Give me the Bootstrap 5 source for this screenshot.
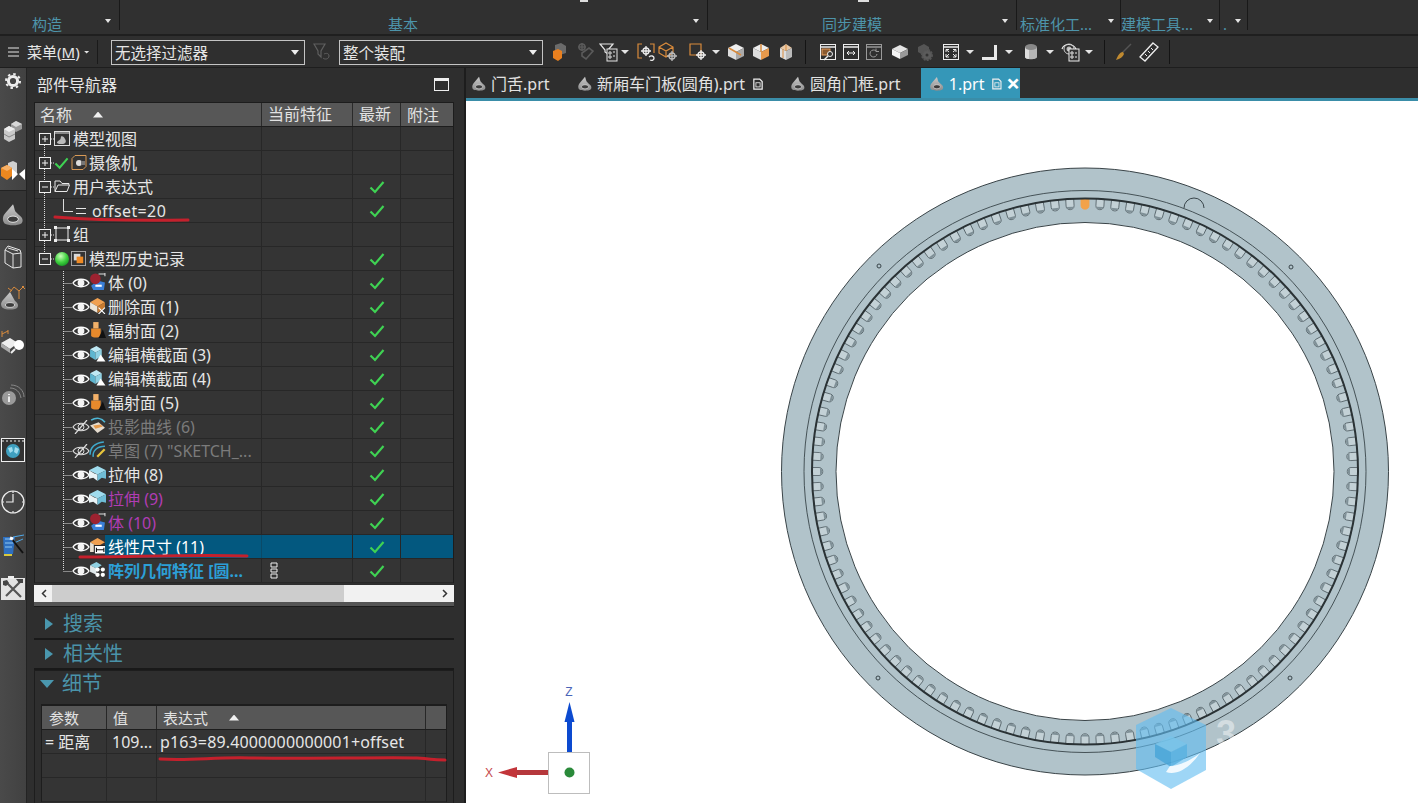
<!DOCTYPE html>
<html lang="zh-CN">
<head>
    <meta charset="UTF-8">
    <meta name="viewport" content="width=device-width, initial-scale=1.0">
    <title>NX</title>
    <link href="https://cdn.jsdelivr.net/npm/bootstrap@5.3.0/dist/css/bootstrap.min.css" rel="stylesheet">
    <style>
        html, body { height: 100%; }
        body {
            width: 1418px; height: 803px; overflow: hidden;
            background: #2e2e2e; color: #e6e6e6;
            font: 16px/24px "Noto Sans", "Noto Sans CJK SC", sans-serif;
        }
        .flex-none { flex: none; }
        /* ribbon */
        .rib { height: 36px; border-bottom: 2px solid #1f1f1f; background: #303030; }
        .rib-grp { height: 30px; border-right: 1px solid #191919; color: #4d94aa; font-size: 15px; line-height: 18px; padding-top: 15px; }
        .rib-caret { position: absolute; bottom: 7px; right: 8px; border: 3px solid transparent; border-top: 4px solid #e4e4e4; border-bottom: 0; }
        .rib-stub { position: absolute; top: 0; width: 11px; height: 2px; background: #ddd; }
        .rib-a { width: 120px; padding-left: 32px; }
        .rib-b { width: 588px; padding-left: 268px; }
        .rib-c { width: 309px; padding-left: 114px; }
        .rib-d { width: 104px; padding-left: 3px; }
        .rib-e { width: 99px; padding-left: 0; }
        .rib-f { width: 28px; padding-left: 3px; }
        .rib-d .rib-caret, .rib-e .rib-caret, .rib-f .rib-caret { right: 6px; }
        .rib-stub1 { left: 460px; width: 8px; }
        .rib-stub2 { left: 738px; }
        /* toolbar */
        .tools { height: 32px; background: #2f2f2f; border-bottom: 1px solid #1e1e1e; padding-top: 4px; }
        .menu-btn { width: 98px; border-right: 1px solid #1a1a1a; height: 24px; font-size: 15px; line-height: 24px; }
        .tb-caret { width: 8px; height: 4px; flex: none; align-self: center; clip-path: polygon(0 0, 100% 0, 50% 100%); background: #e4e4e4; }
        .tb-small { width: 6px; height: 3px; }
        .tb-sep { width: 1px; height: 24px; background: #141414; flex: none; }
        .sel-dark.form-select {
            height: 25px; padding: 0 16px 0 3px; border-radius: 0; border: 1px solid #c4c4c4;
            background-color: #2f2f2f; color: #e6e6e6; font-size: 15.5px; line-height: 22px;
            background-image: url("data:image/svg+xml,%3csvg xmlns='http://www.w3.org/2000/svg' viewBox='0 0 8 5'%3e%3cpath fill='%23eee' d='M0 0h8L4 5z'/%3e%3c/svg%3e");
            background-size: 8px 5px; background-position: right 5px center;
        }
        .sel-a { width: 194px; margin-left: 13px; flex: none; }
        .sel-b { width: 204px; margin-left: 8px; flex: none; }
        .filter-off { margin: 3px 0 0 8px; flex: none; }
        .tool-row { height: 24px; flex: none; }
        .tool-ico { margin-top: 2px; flex: none; }
        /* side strip */
        .strip { width: 27px; flex: none; background: linear-gradient(90deg, #4a4a4a, #414141); border-right: 1px solid #232323; }
        .slot { display: flex; align-items: center; justify-content: center; flex: none; }
        .slot-dim { background: #343434; border-top: 1px solid #232323; border-bottom: 1px solid #232323; }
        .s26 { height: 26px; } .s32 { height: 32px; } .s34 { height: 34px; } .s40 { height: 40px; } .s44 { height: 44px; }
        .s48 { height: 48px; } .s50 { height: 50px; } .s56 { height: 56px; } .s60 { height: 60px; } .s66 { height: 66px; }
        /* navigator */
        .nav-pane { width: 439px; flex: none; background: #2e2e2e; border-right: 2px solid #1d1d1d; padding-left: 7px; position: relative; }
        .pane-title { height: 34px; width: 420px; padding: 5px 5px 0 3px; }
        .max-ico { width: 15px; height: 13px; border: 1px solid #eee; border-top-width: 3px; margin-top: 5px; }
        .grid-wrap { width: 420px; border: 1px solid #1d1d1d; border-top: 0; border-bottom: 0; }
        .grid-row { display: flex; height: 24px; border-bottom: 1px solid #272727; background: #343434; white-space: nowrap; }
        .grid-head { height: 25px; background: #575757; color: #e2e2e2; border-top: 1px solid #1d1d1d; border-bottom: 1px solid #1d1d1d; }
        .grid-head > div { padding-left: 6px; line-height: 25px; }
        .grid-head > .c1 { padding-left: 5px; }
        .c1 { width: 227px; flex: none; display: flex; border-right: 1px solid #272727; }
        .c2 { width: 91px; flex: none; border-right: 1px solid #272727; display: flex; align-items: center; padding-left: 8px; }
        .c3 { width: 48px; flex: none; border-right: 1px solid #272727; display: flex; align-items: center; justify-content: center; }
        .c4 { flex: 1; }
        .grid-head .c1, .grid-head .c2, .grid-head .c3 { border-right-color: #2a2a2a; }
        .sort-up { width: 10px; height: 6px; background: #f0f0f0; clip-path: polygon(50% 0, 100% 100%, 0 100%); align-self: center; margin-left: 21px; }
        .row-text { flex: 1; min-width: 0; margin-left: -3px; padding-left: 3px; }
        .row-sel .row-text { background: #03587f; color: #fff; }
        .row-sel .c2, .row-sel .c3, .row-sel .c4 { background: #03587f; }
        .row-sel .c1 { border-right-color: #0a4a68; }
        .txt-off { color: #7b7b7b; }
        .txt-mod { color: #b13db4; }
        .txt-act { color: #2c9fd6; font-weight: 700; }
        .txt-wide { letter-spacing: .4px; }
        .hscroll { width: 420px; height: 17px; margin-top: 2px; padding: 0 1px; background: #f1f1f1; }
        .hs-arrow { width: 17px; flex: none; display: flex; align-items: center; justify-content: center; }
        .hs-thumb { width: 292px; background: #cdcdcd; }
        .band { width: 420px; height: 5px; background: #555; border-bottom: 1px solid #1c1c1c; margin-bottom: 3px; }
        .sect { width: 420px; height: 30px; color: #4a93a9; font-size: 20px; line-height: 30px; border-bottom: 2px solid #191919; }
        .sect-in { height: 26px; margin: 0 0 7px -6px; color: #4a93a9; font-size: 20px; }
        .tri-r { width: 8px; height: 12px; background: #4a97ae; clip-path: polygon(0 0, 100% 50%, 0 100%); margin: 0 10px 0 11px; }
        .tri-d { width: 14px; height: 8px; background: #4a97ae; clip-path: polygon(0 0, 100% 0, 50% 100%); margin: 0 8px 0 5px; }
        .detail-box { width: 420px; flex: 1; border: 1px solid #1d1d1d; border-bottom: 0; padding: 0 6px; }
        .d1 { width: 65px; flex: none; padding-left: 7px; border-right: 1px solid #272727; }
        .d2 { width: 50px; flex: none; padding-left: 5px; border-right: 1px solid #272727; }
        .d3 { width: 269px; flex: none; padding-left: 3px; border-right: 1px solid #272727; letter-spacing: .14px; }
        .d-wrap { border: 1px solid #1d1d1d; border-bottom: 0; }
        .d-wrap .grid-head > div { font-size: 15px; letter-spacing: 0; }
        .d-wrap .grid-head > .d1 { padding-left: 7px; }
        .d-val { padding-left: 3px; }
        .ink { position: absolute; left: 0; top: 0; pointer-events: none; }
        /* tabs and canvas */
        .tab-bar { height: 33px; flex: none; border-bottom: 3px solid #3a8da8; background: #2e2e2e; }
        .part-tab { height: 30px; display: flex; align-items: center; gap: 4px; padding-top: 1px; color: #e2e2e2; flex: none; }
        .tab-1 { width: 106px; padding-left: 5px; }
        .tab-2 { width: 213px; padding-left: 5px; }
        .tab-3 { width: 136px; padding-left: 5px; }
        .tab-4 { width: 99px; padding-left: 8px; background: #3597b8; color: #fff; }
        .tab-x { font-size: 24px; font-weight: 700; line-height: 1; margin-top: -2px; }
        .canvas { flex: 1; background: #fff; position: relative; }
        .canvas svg { position: absolute; left: 0; top: 0; }
        .main-area { height: 735px; }
    </style>
</head>
<body>
    <svg width="0" height="0" class="position-absolute">
        <defs>
            <linearGradient id="gSeat" x1="0" y1="0" x2="0" y2="1"><stop offset="0" stop-color="#c9c9c9"/><stop offset="1" stop-color="#8b8b8b"/></linearGradient>
            <radialGradient id="gBall" cx=".4" cy=".3" r=".8"><stop offset="0" stop-color="#c8ffb8"/><stop offset=".55" stop-color="#3fd03f"/><stop offset="1" stop-color="#118a20"/></radialGradient>
            <symbol id="i-part" viewBox="0 0 20 20"><path d="M10 1 4 8C1 11 1 15 3 17 6 19 14 19 17 17 19 15 18 12 15 10L12 7C11 5 11 3 10 1Z" fill="url(#gSeat)"/><ellipse cx="10" cy="13.500" rx="4.500" ry="2.600" fill="#3c3c3c" stroke="#e8e8e8" stroke-width=".8"/></symbol>
            <symbol id="i-eye" viewBox="0 0 18 14"><path d="M1 7C4 2 14 2 17 7 14 12 4 12 1 7Z" fill="#333" stroke="#fff" stroke-width="1.400"/><circle cx="9" cy="7" r="3.400" fill="#f4f4f4"/></symbol>
            <symbol id="i-eyeoff" viewBox="0 0 18 14"><path d="M1 7C4 2 14 2 17 7 14 12 4 12 1 7Z" fill="none" stroke="#ddd" stroke-width="1.200"/><circle cx="9" cy="7" r="3" fill="none" stroke="#ddd"/><path d="M3 14 15 0" stroke="#ddd" stroke-width="1.200"/></symbol>
            <symbol id="i-check" viewBox="0 0 16 14"><path d="M1.500 7.500 6 12 14.500 2" fill="none" stroke="#3fd253" stroke-width="2.200"/></symbol>
            <symbol id="i-body" viewBox="0 0 16 16"><path d="M2 12 8 7 15 9 14 16H4Z" fill="#3a7fd8"/><path d="M6 11h6v2H6Z" fill="#fff"/><circle cx="6" cy="5.500" r="5" fill="#9c2230"/><path d="M9 1h6M15 0v3" stroke="#ddd"/></symbol>
            <symbol id="i-del" viewBox="0 0 16 16"><path d="M1 5 8 1 15 5 8 9Z" fill="#f0a050"/><path d="M1 5 8 9V15L1 11Z" fill="#ece5d8"/><path d="M8 9 15 5V10L8 15Z" fill="#c77a2f"/><path d="M9 10 15 16M15 10 9 16" stroke="#fff"/></symbol>
            <symbol id="i-rad" viewBox="0 0 16 16"><path d="M2 7h9v7c-2 2-7 2-9 0Z" fill="#e78a2c"/><path d="M4 1h5v6H4Z" fill="#f2b069"/><path d="M9 16 13 8 16 16Z" fill="#111"/></symbol>
            <symbol id="i-edit" viewBox="0 0 16 16"><path d="M1 4 7 1 12 4 6 7Z" fill="#bfe9f4"/><path d="M1 4 6 7V14L1 11Z" fill="#5fb6d0"/><path d="M6 7 12 4V10L6 14Z" fill="#8fd0e2"/><path d="M11 9 15.500 15.500H7Z" fill="#fff"/></symbol>
            <symbol id="i-proj" viewBox="0 0 16 16"><path d="M2 3C7 0 12 1 15 5" fill="none" stroke="#4eb7d6" stroke-width="1.500"/><path d="M1 8 9 5 15 10 8 15Z" fill="#e6ddd0"/><path d="M4 8 11 7 13 9 6 11Z" fill="#e59a4c"/></symbol>
            <symbol id="i-sketch" viewBox="0 0 16 16"><path d="M1 13C1 6 6 2 14 1M4 15C3 9 8 5 15 5" fill="none" stroke="#3fa9cc" stroke-width="1.400"/><path d="M7 14 14 7 15.500 8.500 8.500 15.500Z" fill="#e8c63c"/></symbol>
            <symbol id="i-ext" viewBox="0 0 16 16"><path d="M0 5 8 1 16 5 8 9Z" fill="#9fdcee"/><path d="M0 5 5 8 8 9V15L4 12 0 13Z" fill="#e9f3f6"/><path d="M16 5 8 9V15L12 12 16 13Z" fill="#6fbdd6"/></symbol>
            <symbol id="i-dim" viewBox="0 0 16 16"><path d="M1 5 8 1 15 5 8 9Z" fill="#f0a050"/><path d="M1 5 8 9V14H1Z" fill="#e8e0d2"/><path d="M5 8h11v8H5Z" fill="#fff" stroke="#222"/><path d="M7 12h7M7 10v4M14 10v4" stroke="#111"/></symbol>
            <symbol id="i-pat" viewBox="0 0 16 16"><path d="M1 4 7 1 12 4 7 7Z" fill="#8fd0e2"/><path d="M1 4 7 7V13L1 10Z" fill="#dfe8ea"/><circle cx="8" cy="8" r="2" fill="#fff"/><circle cx="13" cy="8" r="2" fill="#fff"/><circle cx="8" cy="13" r="2" fill="#fff"/><circle cx="13" cy="13" r="2" fill="#fff"/></symbol>
            <symbol id="i-view" viewBox="0 0 16 16"><rect x=".5" y="1.500" width="15" height="14" fill="#333" stroke="#ddd"/><path d="M1 3h14" stroke="#ddd"/><path d="M3 13C3 11 6 10 6.500 9L7 6.500C9 6 10 7 11 9 13 12 11 14 8 14H5Z" fill="#bbb"/></symbol>
            <symbol id="i-cam" viewBox="0 0 16 16"><path d="M4 1.500h11v11l-3 3H1v-11Z" fill="#333" stroke="#d89a57"/><circle cx="8" cy="9" r="3" fill="#ddd"/><path d="M10 7h4v4h-4Z" fill="#777"/></symbol>
            <symbol id="i-folder" viewBox="0 0 16 16"><path d="M1 13.500V3h5l2 2.500h7V7H4L1 13.500H13L15.500 7" fill="none" stroke="#e8e8e8"/></symbol>
            <symbol id="i-grp" viewBox="0 0 16 16"><rect x="2" y="2" width="12" height="12" fill="none" stroke="#eee"/><path d="M0 0h3v3H0ZM13 0h3v3h-3ZM0 13h3v3H0ZM13 13h3v3h-3Z" fill="#eee"/></symbol>
            <symbol id="i-hist" viewBox="0 0 16 16"><rect x=".5" y=".5" width="15" height="15" fill="#333" stroke="#aaa"/><rect x="3" y="3" width="7" height="7" fill="#d9d9d9"/><rect x="6" y="6" width="7" height="7" fill="#ef8a24"/></symbol>
            <!-- toolbar -->
            <symbol id="t-block" viewBox="0 0 20 20"><path d="M6 3 12 1 17 4V11L11 13 6 11Z" fill="#6b6b6b"/><path d="M4 9 9 7 13 9V16L9 19 4 16Z" fill="#e9801f"/></symbol>
            <symbol id="t-link" viewBox="0 0 20 20"><g fill="none" stroke="#5a5a5a" stroke-width="1.600"><circle cx="6" cy="5" r="3"/><path d="M6 1v8M2 5h8"/><path d="M6 11 13 6 17 9 10 17 6 14Z"/></g></symbol>
            <symbol id="t-filter" viewBox="0 0 20 20"><path d="M1 2h13L9 8v4L6 10V8Z" fill="none" stroke="#e6e6e6" stroke-width="1.200"/><rect x="8" y="7" width="10" height="12" fill="#333" stroke="#e6e6e6"/><path d="M10 10h2v2h-2ZM14 10h2M10 14h2v2h-2ZM14 14h2" stroke="#e6e6e6"/></symbol>
            <symbol id="t-brack" viewBox="0 0 20 20"><path d="M5 2H1v14h4M13 2h4v9" fill="none" stroke="#d98b3c" stroke-width="1.200"/><g stroke="#eee" stroke-width="1.300" fill="none"><circle cx="9" cy="9" r="3"/><path d="M9 4v10M4 9h10"/><path d="M12 15c2-2 5-1 5 1s-2 3-4 2"/></g></symbol>
            <symbol id="t-cubep" viewBox="0 0 20 20"><path d="M1 5 8 1 15 5V11L8 15 1 11ZM1 5 8 9 15 5M8 9V15" fill="none" stroke="#d98b3c" stroke-width="1.200"/><g stroke="#bbb" stroke-width="1.300" fill="none"><circle cx="14" cy="14" r="3"/><path d="M14 9v10M9 14h10"/></g></symbol>
            <symbol id="t-sqp" viewBox="0 0 20 20"><path d="M2 2h11v11H2Z" fill="none" stroke="#d98b3c" stroke-width="1.200"/><g stroke="#eee" stroke-width="1.300" fill="none"><circle cx="13" cy="13" r="3"/><path d="M13 8v10M8 13h10"/></g></symbol>
            <symbol id="t-c1" viewBox="0 0 20 20"><path d="M2 6 10 2 18 6 10 10Z" fill="#eee"/><path d="M2 6 10 10V18L2 14Z" fill="#ddd"/><path d="M18 6 10 10V18L18 14Z" fill="#aaa"/><path d="M3 6 15 13" stroke="#d98b3c" stroke-width="1.500"/></symbol>
            <symbol id="t-c2" viewBox="0 0 20 20"><path d="M2 6 10 2 18 6 10 10Z" fill="#eee"/><path d="M2 6 10 10V18L2 14Z" fill="#ddd"/><path d="M18 6 10 10V18L18 14Z" fill="#e89a4c"/><path d="M10 2V10" stroke="#d98b3c" stroke-width="1.500"/></symbol>
            <symbol id="t-c3" viewBox="0 0 20 20"><path d="M4 6 10 2 16 6 10 9Z" fill="#e8c8a6"/><path d="M4 6 10 9V18L4 15Z" fill="#ddd"/><path d="M16 6 10 9V18L16 15Z" fill="#bbb"/><path d="M10 3V9M7 7V16" stroke="#d98b3c"/></symbol>
            <symbol id="t-w1" viewBox="0 0 20 20"><rect x="2.500" y="2.500" width="15" height="15" fill="none" stroke="#eee"/><path d="M3 5h14" stroke="#eee" stroke-width="1.500"/><rect x="4" y="7" width="8" height="6" fill="#8a5a30" stroke="#e9a060"/><circle cx="12" cy="12" r="2.500" fill="#333" stroke="#eee"/><path d="M10 14 6 18" stroke="#eee" stroke-width="1.500"/></symbol>
            <symbol id="t-w2" viewBox="0 0 20 20"><rect x="2.500" y="2.500" width="15" height="15" fill="none" stroke="#eee"/><path d="M3 5h14" stroke="#eee" stroke-width="1.500"/><path d="M6 11h8M6 11l2-2M6 11l2 2M14 11l-2-2M14 11l-2 2" stroke="#eee" fill="none"/></symbol>
            <symbol id="t-w3" viewBox="0 0 20 20"><rect x="2.500" y="2.500" width="15" height="15" fill="none" stroke="#999"/><path d="M3 5h14" stroke="#999" stroke-width="1.500"/><path d="M13 12a3.500 3.500 0 1 1-1-3M12 6.500V9.500H15" stroke="#999" fill="none"/></symbol>
            <symbol id="t-c4" viewBox="0 0 20 20"><path d="M2 7 10 3 18 7 10 11Z" fill="#e4e4e4"/><path d="M2 7 10 11V17L2 13Z" fill="#f4f4f4"/><path d="M18 7 10 11V17L18 13Z" fill="#999"/></symbol>
            <symbol id="t-gear" viewBox="0 0 20 20"><path d="M3 5 9 2 14 5V11L8 13 3 10Z" fill="#555"/><circle cx="12" cy="13" r="5" fill="#5b5b5b" stroke="#555" stroke-width="2" stroke-dasharray="2 1"/><circle cx="12" cy="13" r="1.500" fill="#333"/></symbol>
            <symbol id="t-w4" viewBox="0 0 20 20"><rect x="2.500" y="2.500" width="15" height="15" fill="none" stroke="#eee"/><path d="M3 5h14" stroke="#eee" stroke-width="1.500"/><path d="M5 10V7.500H8M15 10V7.500H12M5 12V15H8M15 12V15H12M5 7.500 8 10M15 7.500 12 10M5 15 8 12M15 15 12 12" stroke="#eee" fill="none"/></symbol>
            <symbol id="t-ang" viewBox="0 0 20 20"><path d="M15 3H18V18H3V15H15Z" fill="#e8e8e8"/></symbol>
            <symbol id="t-cyl" viewBox="0 0 20 20"><path d="M4 5V15C4 18 16 18 16 15V5Z" fill="#b5b5b5"/><ellipse cx="10" cy="5" rx="6" ry="3" fill="#888"/><path d="M4 5V15C4 16 6 17 8 17V8C6 8 4 7 4 5Z" fill="#ddd"/></symbol>
            <symbol id="t-eye" viewBox="0 0 20 20"><path d="M1 7C3 1 12 1 15 7" fill="none" stroke="#eee" stroke-width="1.200"/><circle cx="8" cy="7" r="5" fill="none" stroke="#ccc"/><circle cx="8" cy="7" r="2.500" fill="#bbb"/><rect x="8" y="7" width="10" height="12" fill="#333" stroke="#eee"/><path d="M10 10h2v2h-2ZM14 11h2M10 14h2v2h-2ZM14 15h2" stroke="#eee"/></symbol>
            <symbol id="t-brush" viewBox="0 0 20 20"><path d="M18 2 9 11" stroke="#555" stroke-width="1.500"/><path d="M10 10C7 10 5 13 3 18 7 17 10 15 11 12Z" fill="#c08a30"/></symbol>
            <symbol id="t-rule" viewBox="0 0 20 20"><path d="M14 1 19 5 6 19 1 15Z" fill="none" stroke="#eee" stroke-width="1.300"/><path d="M12 6l2 2M9 9l2 2M6 12l2 2" stroke="#eee"/></symbol>
            <!-- side strip -->
            <symbol id="s-gear" viewBox="0 0 16 16"><circle cx="8" cy="8" r="4.600" fill="none" stroke="#eee" stroke-width="3"/><circle cx="8" cy="8" r="7" fill="none" stroke="#eee" stroke-width="2" stroke-dasharray="2.500 3"/></symbol>
            <symbol id="s-blocks" viewBox="0 0 20 24"><path d="M8 6 13 3 19 6V11L13 14 8 11Z" fill="#999"/><path d="M8 6 13 9 19 6 13 3Z" fill="#d8d8d8"/><path d="M1 11 6 8 12 11V21L6 24 1 21Z" fill="#c9c9c9"/><path d="M1 11 6 14 12 11 6 8Z" fill="#eee"/><path d="M1 16 6 19 12 16" stroke="#888" fill="none"/></symbol>
            <symbol id="s-ordered" viewBox="0 0 26 26"><path d="M8 2 13 0 17 2V12L13 14 8 12Z" fill="#cfcfcf"/><path d="M1 7 7 4 12 7V15L7 19 1 15Z" fill="#ec8820"/><path d="M1 7 7 10 12 7 7 4Z" fill="#f7b066"/><path d="M12 8 18 13 12 19ZM25 8 19 13 25 19Z" fill="#fff"/></symbol>
            <symbol id="s-book" viewBox="0 0 18 24"><path d="M1 5 4 1 16 5 17 8V22L9 23 1 18Z" fill="none" stroke="#e6e6e6"/><path d="M1 5 9 9V23M9 9 17 8M4 3 14 6" fill="none" stroke="#e6e6e6"/></symbol>
            <symbol id="s-seatdim" viewBox="0 0 26 26"><path d="M10 7 3 15C0 18 1 22 3 23 6 25 14 25 17 23 19 21 18 18 15 16Z" fill="url(#gSeat)"/><ellipse cx="10" cy="20" rx="4.500" ry="2.400" fill="#3c3c3c" stroke="#e8e8e8" stroke-width=".8"/><path d="M10 7 14 2 19 6 24 1M19 6V14M8 3l4 3M22 1l3 3" stroke="#d98b3c" fill="none"/></symbol>
            <symbol id="s-boxmag" viewBox="0 0 26 24"><path d="M1 13 10 8 18 13 10 19Z" fill="#eee"/><path d="M1 13 10 19V23L1 17Z" fill="#aaa"/><path d="M2 4 8 1M2 1V7M8 0V4" stroke="#d98b3c" fill="none"/><circle cx="19" cy="15" r="5" fill="#fff"/><path d="M15 19 11 23" stroke="#eee" stroke-width="2"/></symbol>
            <symbol id="s-info" viewBox="0 0 24 22"><circle cx="8" cy="14" r="7" fill="#9a9a9a"/><path d="M8 10v1M8 12.500V18" stroke="#fff" stroke-width="1.600"/><path d="M9 4C15 4 19 8 20 14M10 1C18 1 23 7 23 13" fill="none" stroke="#888"/></symbol>
            <symbol id="s-web" viewBox="0 0 24 24"><rect x=".5" y=".5" width="23" height="23" fill="#323232" stroke="#eee"/><path d="M1 3h24" stroke="#eee" stroke-dasharray="2 2"/><circle cx="12" cy="13" r="7" fill="#3fa0c0"/><path d="M7 10 11 9 12 13 9 15ZM14 9 18 11 16 16 13 14Z" fill="#9fdcee"/></symbol>
            <symbol id="s-clock" viewBox="0 0 24 24"><circle cx="12" cy="12" r="11" fill="none" stroke="#eee" stroke-width="1.200"/><path d="M12 4V12H5M12 1v2M12 21v2M1 12h2M21 12h2" stroke="#eee" fill="none" stroke-width="1.200"/></symbol>
            <symbol id="s-wand" viewBox="0 0 24 24"><path d="M2 4H14L12 21 3 22Z" fill="#2e6fc0"/><path d="M4 6H13M4 10H12M4 14H11" stroke="#8fc8f0"/><path d="M12 4 23 2M13 10 22 6" stroke="#4ea8e8"/><path d="M10 5 22 20" stroke="#111" stroke-width="2"/><path d="M9 5l3 1" stroke="#fff" stroke-width="3"/><path d="M3 22h8" stroke="#d8c83c" stroke-width="2"/></symbol>
            <symbol id="s-tools" viewBox="0 0 24 24"><rect x="0" y="2" width="24" height="22" fill="#e2e2e2"/><path d="M7 0h6v3H7Z" fill="#eee"/><path d="M5 6 20 21M19 6 5 20" stroke="#555" stroke-width="2.200"/><path d="M15 3h7v4h-4ZM2 5l4-1 2 3-3 3-3-1Z" fill="#444"/></symbol>
            <symbol id="i-doc" viewBox="0 0 12 14"><path d="M1 1h7l3 3v9H1Z" fill="none" stroke="#eee" stroke-width="1.500"/><rect x="3.500" y="5.500" width="5" height="5" fill="none" stroke="#eee"/></symbol>
        </defs>
    </svg>

    <div class="rib d-flex position-relative">
        <div class="rib-grp position-relative text-nowrap rib-a">构造<span class="rib-caret"></span></div>
        <div class="rib-grp position-relative text-nowrap rib-b">基本<span class="rib-caret"></span><span class="rib-stub rib-stub1"></span><span class="rib-stub rib-stub2"></span></div>
        <div class="rib-grp position-relative text-nowrap rib-c">同步建模<span class="rib-caret"></span></div>
        <div class="rib-grp position-relative text-nowrap rib-d">标准化工...<span class="rib-caret"></span></div>
        <div class="rib-grp position-relative text-nowrap rib-e">建模工具...<span class="rib-caret"></span></div>
        <div class="rib-grp position-relative text-nowrap rib-f">.<span class="rib-caret"></span></div>
    </div>

    <div class="tools d-flex align-items-start">
        <div class="menu-btn d-flex align-items-center flex-none">
            <svg width="11" height="10" class="ms-2 hamb" viewBox="0 0 11 10"><path d="M0 1h11M0 5h11M0 9h11" stroke="#e6e6e6"/></svg>
            <span class="text-nowrap ms-1 ps-1">菜单(<u>M</u>)</span>
            <span class="tb-caret ms-1 tb-small"></span>
        </div>
        <select class="form-select sel-dark sel-a"><option>无选择过滤器</option></select>
        <svg width="18" height="18" class="filter-off" viewBox="0 0 18 18"><path d="M1 1h11L8 8v6L5 11V8Z" fill="none" stroke="#5f5f5f" stroke-width="1.200"/><path d="M10 15c2 2 6 1 6-2s-3-3-5-2" fill="none" stroke="#5f5f5f"/></svg>
        <select class="form-select sel-dark sel-b"><option>整个装配</option></select>
        <div id="toolRow" class="d-flex align-items-start tool-row"></div>
    </div>

    <div class="d-flex main-area">
        <div class="strip d-flex flex-column">
            <div class="slot s26"><svg width="16" height="16"><use href="#s-gear"/></svg></div>
            <div class="slot s56 mt-2"><svg width="20" height="24"><use href="#s-blocks"/></svg></div>
            <div class="slot s32"><svg width="26" height="26"><use href="#s-ordered"/></svg></div>
            <div class="slot s50 slot-dim"><svg width="24" height="24"><use href="#i-part"/></svg></div>
            <div class="slot s34"><svg width="18" height="24"><use href="#s-book"/></svg></div>
            <div class="slot s48"><svg width="26" height="26"><use href="#s-seatdim"/></svg></div>
            <div class="slot s40"><svg width="26" height="24"><use href="#s-boxmag"/></svg></div>
            <div class="slot s66"><svg width="24" height="22"><use href="#s-info"/></svg></div>
            <div class="slot s44"><svg width="24" height="24"><use href="#s-web"/></svg></div>
            <div class="slot s60"><svg width="24" height="24"><use href="#s-clock"/></svg></div>
            <div class="slot s26"><svg width="24" height="24"><use href="#s-wand"/></svg></div>
            <div class="slot s60"><svg width="24" height="24"><use href="#s-tools"/></svg></div>
        </div>

        <div class="nav-pane d-flex flex-column">
            <div class="pane-title d-flex justify-content-between">
                <span>部件导航器</span>
                <span class="max-ico"></span>
            </div>
            <div class="grid-wrap">
                <div class="grid-row grid-head">
                    <div class="c1"><span>名称</span><span class="sort-up"></span></div>
                    <div class="c2">当前特征</div>
                    <div class="c3 justify-content-start">最新</div>
                    <div class="c4">附注</div>
                </div>
                <div id="treeRows"></div>
            </div>
            <div class="hscroll d-flex">
                <div class="hs-arrow"><svg width="6" height="9" viewBox="0 0 6 9"><path d="M5 1 1.500 4.500 5 8" fill="none" stroke="#333" stroke-width="1.500"/></svg></div>
                <div class="hs-thumb"></div>
                <div class="ms-auto hs-arrow"><svg width="6" height="9" viewBox="0 0 6 9"><path d="M1 1 4.500 4.500 1 8" fill="none" stroke="#333" stroke-width="1.500"/></svg></div>
            </div>
            <div class="band"></div>
            <div class="sect d-flex align-items-center"><span class="tri-r"></span>搜索</div>
            <div class="sect d-flex align-items-center"><span class="tri-r"></span>相关性</div>
            <div class="detail-box d-flex flex-column">
                <div class="sect-in d-flex align-items-center"><span class="tri-d"></span>细节</div>
                <div class="d-wrap">
                    <div class="grid-row grid-head">
                        <div class="d1">参数</div>
                        <div class="d2">值</div>
                        <div class="d3 d-flex"><span>表达式</span><span class="sort-up"></span></div>
                    </div>
                    <div class="grid-row"><div class="d1 d-val">= 距离</div><div class="d2">109...</div><div class="d3">p163=89.4000000000001+offset</div></div>
                    <div class="grid-row"><div class="d1"></div><div class="d2"></div><div class="d3"></div></div>
                    <div class="grid-row"><div class="d1"></div><div class="d2"></div><div class="d3"></div></div>
                </div>
            </div>
            <!-- hand-drawn red marks over the panel -->
            <svg class="ink" width="439" height="735" viewBox="27 68 439 735" fill="none" stroke="#c5202c" stroke-width="3" stroke-linecap="round">
                <path d="M55 217C80 219 130 221 188 220"/>
                <path d="M80 557C130 557 200 554 247 556"/>
                <path d="M160 759C190 761 215 757 250 758S400 757 417 758 430 760 445 760"/>
            </svg>
        </div>

        <div class="d-flex flex-column flex-grow-1">
            <div class="tab-bar d-flex">
                <div class="part-tab tab-1"><svg width="16" height="16"><use href="#i-part"/></svg>门舌.prt</div>
                <div class="part-tab tab-2"><svg width="16" height="16"><use href="#i-part"/></svg>新厢车门板(圆角).prt<svg width="10" height="12" class="ms-1"><use href="#i-doc"/></svg></div>
                <div class="part-tab tab-3"><svg width="16" height="16"><use href="#i-part"/></svg>圆角门框.prt</div>
                <div class="part-tab tab-4"><svg width="16" height="16"><use href="#i-part"/></svg>1.prt<svg width="10" height="12" class="ms-1"><use href="#i-doc"/></svg><span class="tab-x">×</span></div>
            </div>
            <div class="canvas">
                <svg id="model" width="952" height="702" viewBox="466 101 952 702">
                    <g id="ring"></g>
                    <!-- triad -->
                    <rect x="548.500" y="752.500" width="41" height="41" fill="#fff" stroke="#bdbdbd"/>
                    <path d="M567 722h5v30h-5Z" fill="#0c4ad0"/><path d="M569.500 702 574.500 722H564.500Z" fill="#0c4ad0"/>
                    <path d="M517 770h31v5h-31Z" fill="#b5383c"/><path d="M498 772.500 517 767V778Z" fill="#c2353a"/>
                    <circle cx="569.500" cy="772.500" r="5" fill="#2a8a3a"/>
                    <text x="569" y="696" font-size="12" text-anchor="middle" fill="#4a64b8" font-family="Liberation Sans, sans-serif">Z</text>
                    <text x="489" y="777" font-size="12" text-anchor="middle" fill="#c5484c" font-family="Liberation Sans, sans-serif">X</text>
                    <!-- watermark -->
                    <g>
                        <path d="M1171 708 1206 725V770L1171 789 1136 769V725Z" fill="#62bdf0" fill-opacity=".62"/>
                        <path d="M1155 744 1171 736 1187 744 1171 752Z" fill="#78c4ea" fill-opacity=".8"/>
                        <path d="M1155 744 1171 752V767L1155 757Z" fill="#4aa6d8" fill-opacity=".85"/>
                        <path d="M1187 744 1171 752V767L1187 757Z" fill="#5ab2e0" fill-opacity=".85"/>
                        <path d="M1166 772C1176 776 1190 768 1200 753 1192 760 1178 766 1170 766Z" fill="#fff" fill-opacity=".85"/>
                        <text x="1216" y="746" font-size="36" font-weight="700" fill="#fff" fill-opacity=".45" font-family="Liberation Sans, sans-serif">3</text>
                    </g>
                </svg>
            </div>
        </div>
    </div>

    <script src="https://cdn.jsdelivr.net/npm/bootstrap@5.3.0/dist/js/bootstrap.bundle.min.js"></script>
    <script>
        // toolbar: icon id, gap before it ('|' separator, '^' dropdown caret)
        const tools = [['t-block',6],['t-link',7],['t-filter',3],['^',2],['t-brack',8],['t-cubep',1],['t-sqp',10],['^',4],
            ['t-c1',6],['t-c2',5],['t-c3',5],['|',9],['t-w1',12],['t-w2',3],['t-w3',3],['t-c4',6],['t-gear',5],['t-w4',6],['^',5],
            ['t-ang',5],['^',6],['t-cyl',8],['^',5],['t-eye',7],['^',4],['|',11],['t-brush',8],['t-rule',6],['|',10]];
        document.getElementById('toolRow').innerHTML = tools.map(([id, gap]) => {
            if (id === '^') return `<span class="tb-caret" style="margin-left:${gap}px"></span>`;
            if (id === '|') return `<span class="tb-sep" style="margin-left:${gap}px"></span>`;
            return `<svg width="20" height="20" class="tool-ico" style="margin-left:${gap}px"><use href="#${id}"/></svg>`;
        }).join('');

        // navigator rows
        const rows = [
            {lv: 0, box: '+', icon: 'i-view', text: '模型视图'},
            {lv: 0, box: '+', pre: 'i-check', icon: 'i-cam', text: '摄像机'},
            {lv: 0, box: '-', icon: 'i-folder', text: '用户表达式', ok: 1},
            {lv: 'e', text: 'offset=20', cls: 'txt-wide', ok: 1},
            {lv: 0, box: '+', icon: 'i-grp', text: '组'},
            {lv: 0, box: '-', ball: 1, icon: 'i-hist', text: '模型历史记录', ok: 1},
            {lv: 1, icon: 'i-body', text: '体 (0)', ok: 1},
            {lv: 1, icon: 'i-del', text: '删除面 (1)', ok: 1},
            {lv: 1, icon: 'i-rad', text: '辐射面 (2)', ok: 1},
            {lv: 1, icon: 'i-edit', text: '编辑横截面 (3)', ok: 1},
            {lv: 1, icon: 'i-edit', text: '编辑横截面 (4)', ok: 1},
            {lv: 1, icon: 'i-rad', text: '辐射面 (5)', ok: 1},
            {lv: 1, off: 1, icon: 'i-proj', text: '投影曲线 (6)', cls: 'txt-off', ok: 1},
            {lv: 1, off: 1, icon: 'i-sketch', text: '草图 (7) "SKETCH_...', cls: 'txt-off', ok: 1},
            {lv: 1, icon: 'i-ext', text: '拉伸 (8)', ok: 1},
            {lv: 1, icon: 'i-ext', text: '拉伸 (9)', cls: 'txt-mod', ok: 1},
            {lv: 1, icon: 'i-body', text: '体 (10)', cls: 'txt-mod', ok: 1},
            {lv: 1, icon: 'i-dim', text: '线性尺寸 (11)', ok: 1, sel: 1},
            {lv: 1, icon: 'i-pat', text: '阵列几何特征 [圆...', cls: 'txt-act', ok: 1, last: 1, cur: 1}
        ];
        const dot = 'stroke="#ddd" stroke-dasharray="1 1" fill="none"';
        function gutter(r, i) {
            let s = '', w = 73;
            if (i <= 5) s += `<path d="M44.500 ${i === 0 ? 12 : 0}V${i === 5 ? 12 : 24}" ${dot}/>`;
            if (r.lv === 0) {
                w = 38;
                s += `<rect x="39.500" y="6.500" width="11" height="11" fill="#343434" stroke="#f0f0f0"/><path d="M42 12h6${r.box === '+' ? 'M45 9v6' : ''}" stroke="#f0f0f0"/>`;
                s += `<path d="M51 12h3" ${dot}/>`;
                if (r.pre) { w = 54; s += `<use href="#${r.pre}" x="54" y="5" width="15" height="14"/><use href="#${r.icon}" x="71" y="3" width="16" height="16"/>`; }
                else if (r.ball) { w = 54; s += `<circle cx="62" cy="12" r="7" fill="url(#gBall)"/><use href="#${r.icon}" x="71" y="4" width="15" height="15"/>`; }
                else s += `<use href="#${r.icon}" x="54" y="3" width="16" height="16"/>`;
            } else if (r.lv === 'e') {
                w = 57;
                s += `<path d="M63.500 0V12.500H73" stroke="#ddd" fill="none"/><path d="M76 9.500h10M76 14.500h10" stroke="#e8e8e8"/>`;
            } else {
                s += `<path d="M63.500 0V${r.last ? 12 : 24}M63.500 12.500H72" ${dot}/>`;
                s += `<use href="#${r.off ? 'i-eyeoff' : 'i-eye'}" x="72" y="5" width="18" height="14"/>`;
                s += `<use href="#${r.icon}" x="89" y="2" width="17" height="17"/>`;
            }
            return `<svg width="${w}" height="24" viewBox="35 0 ${w} 24" class="flex-none">${s}</svg>`;
        }
        document.getElementById('treeRows').innerHTML = rows.map((r, i) => `
            <div class="grid-row${r.sel ? ' row-sel' : ''}">
                <div class="c1">${gutter(r, i)}<div class="row-text ${r.cls || ''}">${r.text}</div></div>
                <div class="c2">${r.cur ? '<svg width="8" height="17" viewBox="0 0 8 17"><path d="M1 1h6v4H1ZM1 7h6v3H1ZM1 12h6v4H1Z" fill="none" stroke="#eee"/></svg>' : ''}</div>
                <div class="c3">${r.ok ? '<svg width="16" height="14"><use href="#i-check"/></svg>' : ''}</div>
                <div class="c4"></div>
            </div>`).join('');

        // ring model, coordinates are page pixels
        const cx = 1085, cy = 471.5, teeth = 112;
        let g = `<circle cx="${cx}" cy="${cy}" r="303.500" fill="#b1c3ca" stroke="#3a4448"/>`;
        g += `<path d="M1184 208A10 10 0 0 1 1204 208" fill="none" stroke="#39454a"/>`;
        g += `<circle cx="${cx}" cy="${cy}" r="281" fill="none" stroke="#39454a" stroke-width=".9"/>`;
        for (let k = 0; k < teeth; k++) {
            const a = k * 360 / teeth, hot = k === 0;
            const body = hot ? '#f2a24a' : '#c3d1d6', edge = hot ? '#f2a24a' : '#4f5c62', tip = hot ? '#f2a24a' : '#7f9097';
            g += `<g transform="rotate(${a} ${cx} ${cy})"><path d="M${cx - 4} ${cy - 273}V${cy - 266}C${cx - 4} ${cy - 261} ${cx + 4} ${cy - 261} ${cx + 4} ${cy - 266}V${cy - 273}Z" fill="${body}" stroke="${edge}" stroke-width=".8"/><path d="M${cx - 3.500} ${cy - 265}C${cx - 3} ${cy - 262} ${cx + 3} ${cy - 262} ${cx + 3.500} ${cy - 265}Z" fill="${tip}"/></g>`;
        }
        g += `<circle cx="${cx}" cy="${cy}" r="273" fill="none" stroke="#2a3235" stroke-width="2"/>`;
        g += `<circle cx="${cx}" cy="${cy}" r="249" fill="#fff" stroke="#3a4448"/>`;
        [[1291, 267], [879, 266], [878, 678], [1290, 678]].forEach(p => {
            g += `<circle cx="${p[0]}" cy="${p[1]}" r="2" fill="none" stroke="#39454a"/>`;
        });
        document.getElementById('ring').innerHTML = g;
    </script>
</body>
</html>
